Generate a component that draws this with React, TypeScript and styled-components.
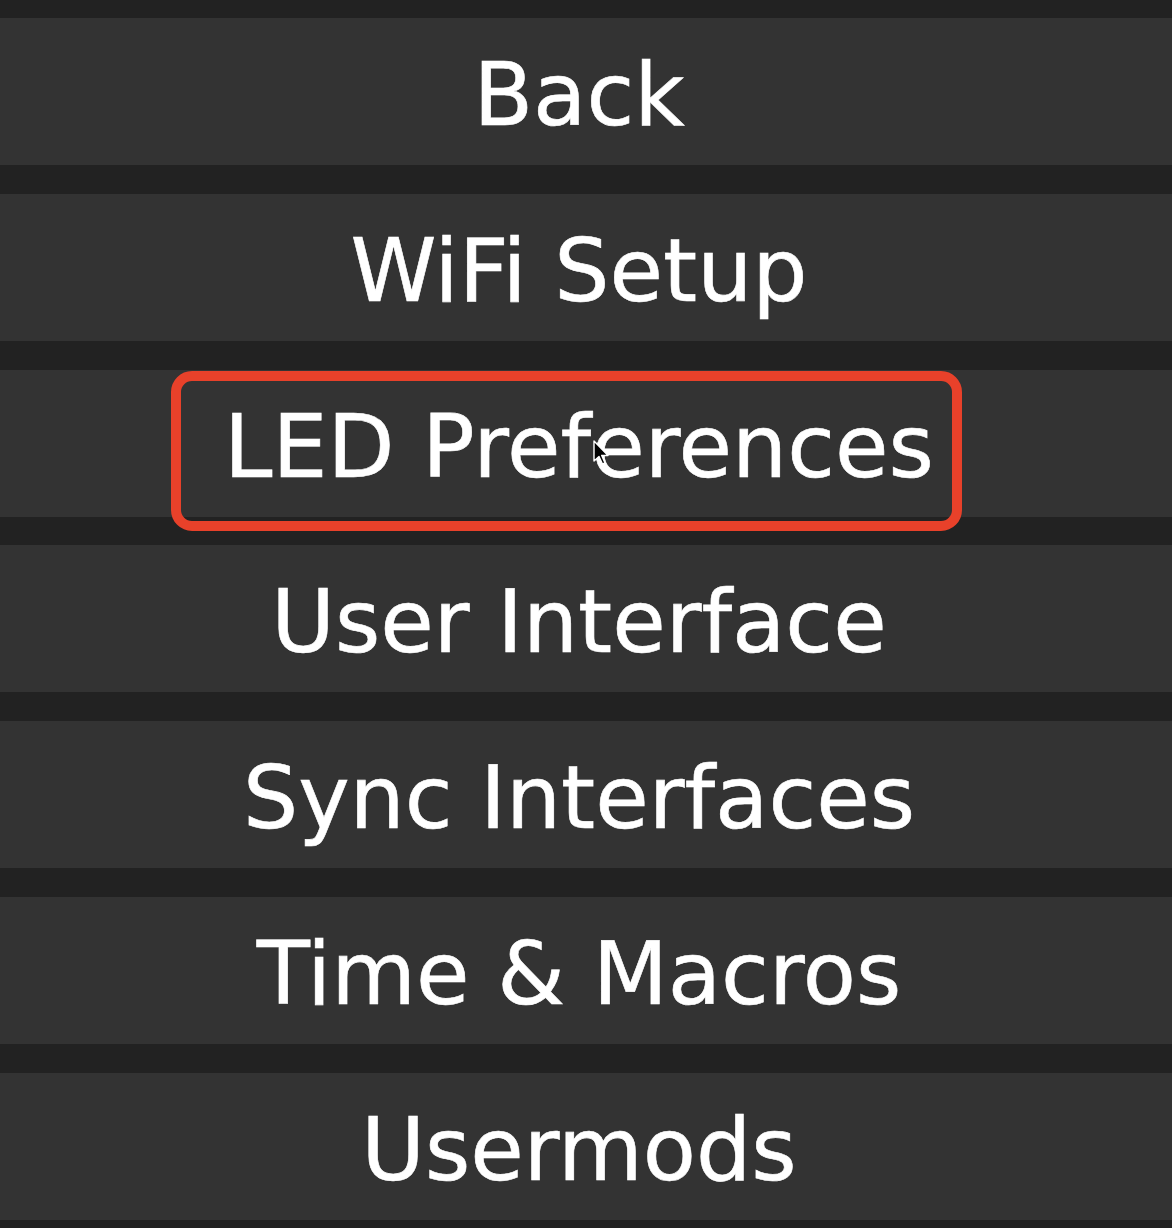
import React from "react";
import styled, { createGlobalStyle } from "styled-components";

const GlobalStyle = createGlobalStyle`
  html, body {
    margin: 0;
    padding: 0;
    background: #222;
  }
  body {
    font-family: "DejaVu Sans", Verdana, sans-serif;
    color: #fff;
  }
`;

const items = [
  "Back",
  "WiFi Setup",
  "LED Preferences",
  "User Interface",
  "Sync Interfaces",
  "Time & Macros",
  "Usermods",
];

const Menu = styled.div`
  display: flex;
  flex-direction: column;
  gap: 28.8px;
  padding-top: 18px;
  height: 1228px;
  box-sizing: border-box;
  overflow: hidden;
  background: #222;
`;

const MenuButton = styled.button`
  position: relative;
  flex: 0 0 auto;
  box-sizing: border-box;
  height: 147px;
  width: 100%;
  margin: 0;
  padding: 0 14px 0 0;
  border: 0;
  background: #333;
  color: #fff;
  font-family: "DejaVu Sans", Verdana, sans-serif;
  font-size: 87px;
  line-height: 147px;
  text-align: center;
  white-space: nowrap;
  overflow: visible;
  -webkit-text-stroke: 0.6px #fff;
  cursor: pointer;
`;

const Label = styled.span`
  display: inline-block;
  transform: translateY(4px);
`;

const Highlight = styled.span`
  position: absolute;
  top: 1px;
  left: 171px;
  width: 791px;
  height: 160px;
  box-sizing: border-box;
  border: 10px solid #e8412a;
  border-radius: 21px;
  pointer-events: none;
`;

const Cursor = styled.svg`
  position: absolute;
  top: 69px;
  left: 592px;
  width: 18px;
  height: 28px;
  pointer-events: none;
`;

export default function App() {
  return (
    <>
      <GlobalStyle />
      <Menu>
        {items.map((label, i) => (
          <MenuButton key={label}>
            <Label>{label}</Label>
            {i === 2 && (
              <>
                <Highlight />
                <Cursor viewBox="0 0 18 28">
                  <path
                    d="M2 2 L2 22 L7 17.5 L10.5 25 L13 24 L9.7 16.5 L16 16.5 Z"
                    fill="#000"
                    stroke="#fff"
                    strokeWidth="1.4"
                    strokeLinejoin="round"
                  />
                </Cursor>
              </>
            )}
          </MenuButton>
        ))}
      </Menu>
    </>
  );
}
